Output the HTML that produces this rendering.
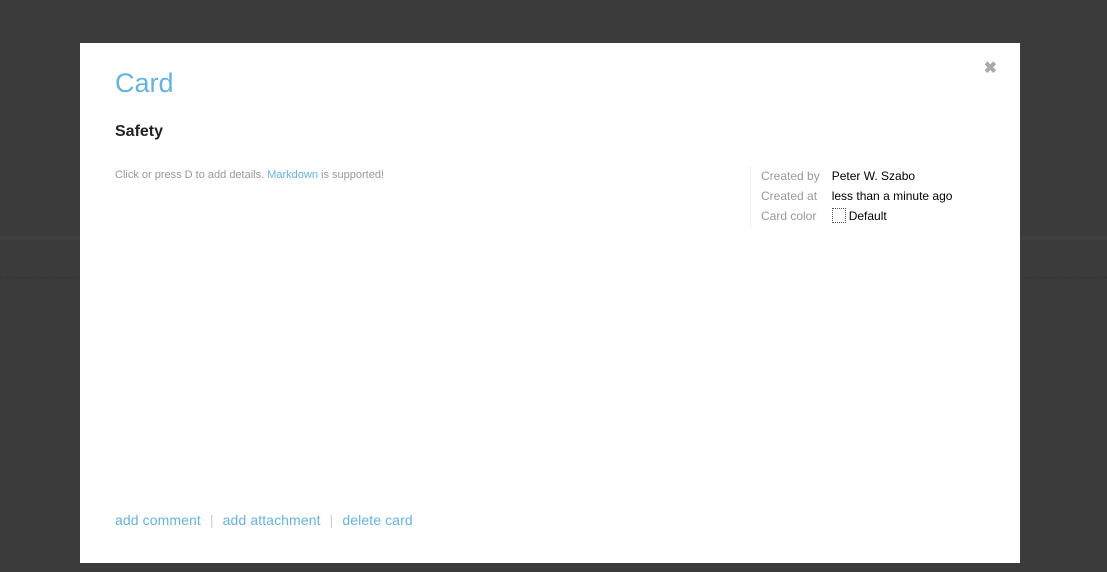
<!DOCTYPE html>
<html><head><style>
body{margin:0;width:1107px;height:572px;background:#3b3b3b;overflow:hidden;font-family:"Liberation Sans",sans-serif;position:relative}
.band{position:absolute;left:0;right:0;top:236px;height:4px;background:#404040}
.dash{position:absolute;left:0;right:0;top:277px;border-top:1px dashed #333}
.modal{position:absolute;left:80px;top:43px;width:940px;height:520px;background:#fff}
.t{position:absolute;left:35px;top:25px;font-size:27px;color:#66b2de}
.x{position:absolute;right:23px;top:15px;font-size:16px;color:#aaa;font-weight:bold}
.s{position:absolute;left:35px;top:80px;font-size:16px;font-weight:bold;color:#222}
.d{position:absolute;left:35px;top:126px;font-size:11px;color:#999}
.d span{color:#66b2de}
.meta{position:absolute;left:670px;top:123px;border-left:1px solid #eee;padding-left:10px;font-size:12px;line-height:20px;height:62px}
.meta td{padding:0 12px 0 0;vertical-align:top}
.l{color:#999}
.box{display:inline-block;width:12px;height:13px;border:1px dotted #555;vertical-align:-3px;margin-right:3px}
.f{position:absolute;left:35px;top:469px;font-size:14px;color:#66b2de;letter-spacing:0.1px}
.f i{font-style:normal;color:#ccc;margin:0 9px}
</style></head><body>
<div class="band"></div><div class="dash"></div>
<div class="modal">
<div class="t">Card</div><div class="x">✖</div>
<div class="s">Safety</div>
<div class="d">Click or press D to add details. <span>Markdown</span> is supported!</div>
<div class="meta"><table cellspacing="0" cellpadding="0">
<tr><td class="l">Created by</td><td>Peter W. Szabo</td></tr>
<tr><td class="l">Created at</td><td>less than a minute ago</td></tr>
<tr><td class="l">Card color</td><td><span class="box"></span>Default</td></tr>
</table></div>
<div class="f">add comment<i>|</i>add attachment<i>|</i>delete card</div>
</div>
</body></html>
